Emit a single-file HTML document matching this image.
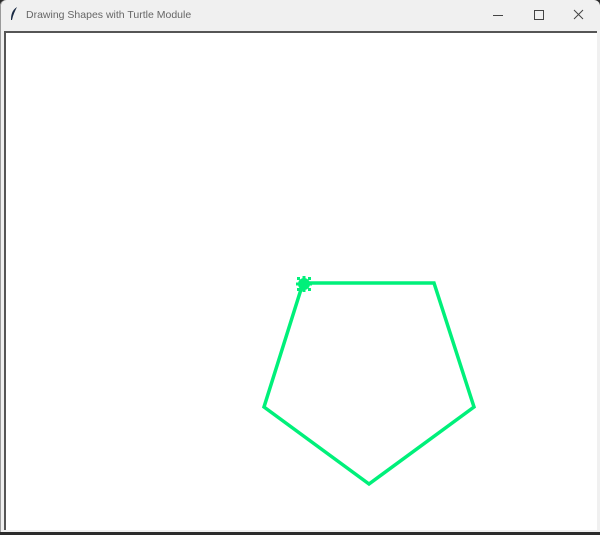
<!DOCTYPE html>
<html><head><style>
body{margin:0;width:600px;height:535px;background:#2b2b2b;overflow:hidden;font-family:"Liberation Sans",sans-serif}
.win{position:absolute;left:0;top:0;width:600px;height:532px;background:#f0f0f0;border-radius:6px 6px 0 0;box-shadow:inset 1px 0 0 #9a9a9a}
.title{position:absolute;left:26px;top:9px;font-size:10.5px;color:#666}
.cv{position:absolute;left:4px;top:31px;width:591px;height:497px;background:#fff;border-top:2px solid #555;border-left:2px solid #555}
</style></head><body>
<div class="win">
<svg style="position:absolute;left:9px;top:6px" width="10" height="16"><path d="M8 1 C3 4 2 9 2 14 L3 14 C4 9 6 5 8 1Z" fill="#1a2a44"/></svg>
<div class="title">Drawing Shapes with Turtle Module</div>
<svg style="position:absolute;left:490px;top:8px" width="100" height="14" fill="none" stroke="#444" stroke-width="1">
<path d="M3 7.5h10"/><rect x="44.5" y="2.5" width="9" height="9"/><path d="M84 2l9 9M93 2l-9 9"/>
</svg>
<div class="cv"></div>
<svg style="position:absolute;left:0;top:0" width="600" height="535">
<polygon points="303,283 434,283 474,407 369,484 264,407" fill="none" stroke="#00f07a" stroke-width="3.5" stroke-linejoin="miter"/>
<g transform="translate(304,284)" fill="#00f07a"><circle r="6"/><rect x="-8" y="-1.5" width="16" height="3"/><rect x="-1.5" y="-8" width="3" height="16"/><rect x="-7" y="-7" width="3" height="3"/><rect x="4" y="-7" width="3" height="3"/><rect x="-7" y="4" width="3" height="3"/><rect x="4" y="4" width="3" height="3"/></g>
</svg>
</div>
</body></html>
